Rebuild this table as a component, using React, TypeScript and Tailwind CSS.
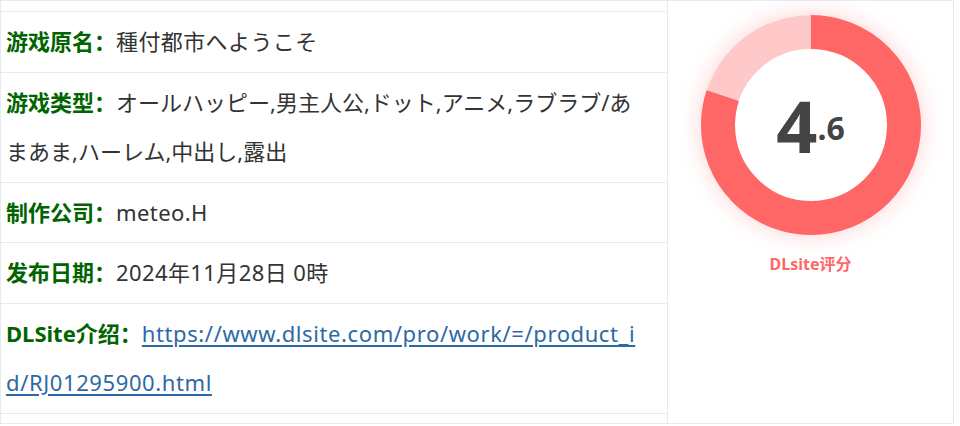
const font = { fontFamily: '"Noto Sans", "Noto Sans CJK SC", sans-serif' };

const rows: { label: string; value: string; href?: boolean; wide?: boolean }[] = [
  { label: "游戏原名：", value: "種付都市へようこそ", wide: true },
  { label: "游戏类型：", value: "オールハッピー,男主人公,ドット,アニメ,ラブラブ/あまあま,ハーレム,中出し,露出" },
  { label: "制作公司：", value: "meteo.H", wide: true },
  { label: "发布日期：", value: "2024年11月28日 0時", wide: true },
  { label: "DLSite介绍：", value: "https://www.dlsite.com/pro/work/=/product_id/RJ01295900.html", href: true },
];

function Donut({ score }: { score: number }) {
  const r = 93;
  const c = 2 * Math.PI * r;
  const pct = 0.8;
  return (
    <div className="relative h-[220px] w-[220px] rounded-full shadow-[0_0_22px_rgba(255,102,102,0.3)]">
      <svg width="220" height="220" viewBox="0 0 220 220" className="-rotate-90">
        <circle cx="110" cy="110" r={r} fill="none" stroke="#ffc9c9" strokeWidth="34" />
        <circle
          cx="110"
          cy="110"
          r={r}
          fill="none"
          stroke="#ff6666"
          strokeWidth="34"
          strokeDasharray={`${c * pct} ${c}`}
        />
      </svg>
      <div className="absolute inset-0 flex items-center justify-center">
        <div className="text-[72px] font-bold leading-none text-[#444]">
          {Math.floor(score)}
          <span className="align-[13px] text-[32px]">.{Math.round((score % 1) * 10)}</span>
        </div>
      </div>
    </div>
  );
}

export default function App() {
  return (
    <div className="h-[426px] w-[960px] bg-white" style={font}>
      <div className="flex h-[424px] w-[954px] border border-[#e4ebf3]">
        <div className="flex w-[666px] flex-col">
          <div className="h-[11px] border-b border-[#e4ebf3]" />
          {rows.map((r) => (
            <div key={r.label} className="border-b border-[#e4ebf3] py-[5px] pl-[5px] pr-[20px] text-[22px] leading-[49.5px] text-[#333] break-all">
              <b className="text-[#006400]">{r.label}</b>
              {r.href ? (
                <a href="#" className="tracking-[0.6px] text-[#2e69a6] underline underline-offset-[3px]">{r.value}</a>
              ) : (
                <span className={r.wide ? "tracking-[0.4px]" : ""}>{r.value}</span>
              )}
            </div>
          ))}
        </div>
        <div className="flex flex-1 flex-col items-center border-l border-[#e4ebf3] pt-[14px]">
          <Donut score={4.6} />
          <div className="mt-[17px] text-[16px] font-bold text-[#ff6666]">DLsite评分</div>
        </div>
      </div>
    </div>
  );
}
